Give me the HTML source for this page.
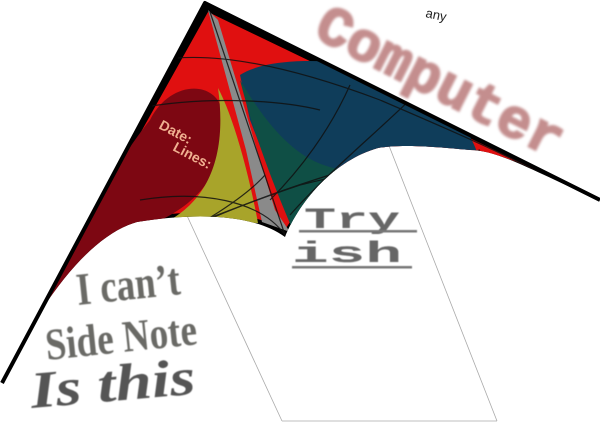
<!DOCTYPE html>
<html><head><style>
html,body{margin:0;padding:0;background:#fff;width:600px;height:423px;overflow:hidden}
svg{display:block}
</style></head><body>
<svg width="600" height="423" viewBox="0 0 600 423" xmlns="http://www.w3.org/2000/svg">
<defs>
<filter id="bl"><feGaussianBlur stdDeviation="1.2"/></filter>
<filter id="bl2"><feGaussianBlur stdDeviation="0.6"/></filter>
<clipPath id="k"><path d="M205,3 L600,200 C540,175 500,150 470,150 C420,145 395,145 378,148 C335,160 300,200 285,237 C255,215 200,212 137,222 C90,235 40,300 2,383 Z"/></clipPath>
</defs>
<g stroke="#aaa" stroke-width="0.8" fill="none">
<line x1="152" y1="140" x2="282" y2="421"/>
<line x1="364" y1="82" x2="497" y2="421"/>
<line x1="282" y1="421" x2="497" y2="421"/>
</g>
<path d="M205,3 L600,200 C540,175 500,150 470,150 C420,145 395,145 378,148 C335,160 300,200 285,237 C255,215 200,212 137,222 C90,235 40,300 2,383 Z" fill="#000"/>
<g clip-path="url(#k)">
<path d="M208,12 L590,196 C540,172 500,150 470,152 C420,148 395,148 378,152 C335,165 300,205 285,230 C255,212 200,208 137,218 C90,232 40,300 8,370 Z" fill="#e01010"/>
<path d="M240,75 C270,55 360,55 420,85 C450,105 470,130 478,155 L380,152 C340,160 305,195 292,228 L250,120 Z" fill="#0f3d5a"/>
<path d="M240,80 C255,140 280,200 292,228 C305,210 320,190 345,170 C300,165 270,130 240,80 Z" fill="#0f4f45"/>
<path d="M150,120 C170,80 215,80 222,110 C228,160 210,200 150,225 C120,235 80,250 60,300 L30,340 C60,260 110,170 150,120 Z" fill="#7d0712"/>
<path d="M218,88 C235,120 250,180 258,223 L170,220 C205,200 228,160 218,88 Z" fill="#a8a42a"/>
<path d="M208,10 L218,20 L275,210 L290,232 L262,222 L246,150 Z" fill="#8a8a8a"/>
</g>
<g stroke="#111" stroke-width="1.2" fill="none" clip-path="url(#k)" opacity="0.85">
<path d="M210,12 L285,235"/>
<path d="M70,290 C140,250 220,205 380,160"/>
<path d="M50,310 C130,260 230,215 265,175"/>
<path d="M140,200 C200,190 260,200 285,235"/>
<path d="M100,260 C180,230 240,205 300,185 C380,165 440,160 480,150"/>
<path d="M160,60 C220,50 300,70 380,100 C450,130 520,160 570,190"/>
<path d="M130,110 C200,95 280,100 320,110"/>
<path d="M270,200 C300,170 330,130 350,85"/>
<path d="M290,215 C330,170 380,130 420,90"/>
</g>
<path d="M2,383 L205,3 L600,200" fill="none" stroke="#000" stroke-width="4" stroke-linejoin="round"/>
<text x="425" y="17" font-family="Liberation Sans, sans-serif" font-size="13" fill="#222" transform="rotate(12 425 17)">any</text>
<text x="312" y="36" font-family="Liberation Mono, monospace" font-weight="bold" font-size="56" fill="#c48e8e" stroke="#c48e8e" stroke-width="2" filter="url(#bl)" textLength="270" lengthAdjust="spacingAndGlyphs" transform="rotate(27 312 36)">Computer</text>
<text x="158" y="128" font-family="Liberation Sans Narrow, Liberation Sans, sans-serif" font-weight="bold" font-size="14" fill="#f0b090" transform="rotate(28 158 128)">Date:</text>
<text x="172" y="150" font-family="Liberation Sans Narrow, Liberation Sans, sans-serif" font-weight="bold" font-size="14" fill="#f0b090" transform="rotate(28 172 150)">Lines:</text>
<g filter="url(#bl2)" fill="#666">
<text x="304" y="228" font-family="Liberation Mono, monospace" font-weight="bold" font-size="30" textLength="96" lengthAdjust="spacingAndGlyphs">Try</text>
<rect x="299" y="230" width="118" height="2.5" fill="#777"/>
<text x="292" y="262" font-family="Liberation Mono, monospace" font-weight="bold" font-size="30" textLength="110" lengthAdjust="spacingAndGlyphs">ish</text>
<rect x="292" y="266" width="120" height="2.5" fill="#777"/>
</g>
<g filter="url(#bl2)" fill="#6a6a66" font-family="Liberation Serif, serif">
<text x="0" y="0" font-size="34" font-weight="bold" textLength="104" lengthAdjust="spacingAndGlyphs" transform="translate(78,305) rotate(-6) scale(1,1.35)">I can’t</text>
<text x="0" y="0" font-size="32" font-weight="bold" textLength="152" lengthAdjust="spacingAndGlyphs" transform="translate(47,360) rotate(-6) scale(1,1.4)">Side Note</text>
<text x="0" y="0" font-size="40" font-weight="bold" font-style="italic" fill="#555" textLength="165" lengthAdjust="spacingAndGlyphs" transform="translate(32,408) rotate(-5) scale(1,1.3)">Is this</text>
</g>
</svg>
</body></html>
